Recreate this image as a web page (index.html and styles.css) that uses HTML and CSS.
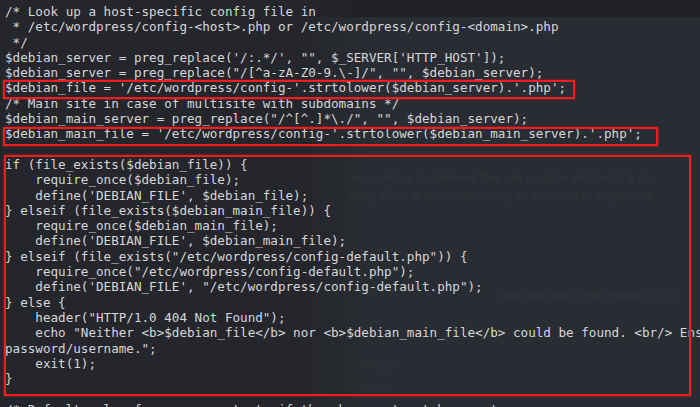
FILE: index.html
```html
<!DOCTYPE html>
<html>
<head>
<meta charset="utf-8">
<link rel="stylesheet" href="styles.css">
</head>
<body>
<div class="screen">
  <div class="ghost">
    <div class="ghost-band"></div>
    <div class="ghost-line g1">ing can be to defined the set people and help it to</div>
    <div class="ghost-line g2">ding does it normal setting as needed in page and</div>
    <div class="ghost-line g3">ead and pass not global, or in</div>
    <div class="ghost-line g4">chipsis</div>
    <div class="ghost-line g5">dicm</div>
  </div>
<pre class="code">/* Look up a host-specific config file in
 * /etc/wordpress/config-&lt;host&gt;.php or /etc/wordpress/config-&lt;domain&gt;.php
 */
$debian_server = preg_replace('/:.*/', "", $_SERVER['HTTP_HOST']);
$debian_server = preg_replace("/[^a-zA-Z0-9.\-]/", "", $debian_server);
$debian_file = '/etc/wordpress/config-'.strtolower($debian_server).'.php';
/* Main site in case of multisite with subdomains */
$debian_main_server = preg_replace("/^[^.]*\./", "", $debian_server);
$debian_main_file = '/etc/wordpress/config-'.strtolower($debian_main_server).'.php';

if (file_exists($debian_file)) {
    require_once($debian_file);
    define('DEBIAN_FILE', $debian_file);
} elseif (file_exists($debian_main_file)) {
    require_once($debian_main_file);
    define('DEBIAN_FILE', $debian_main_file);
} elseif (file_exists("/etc/wordpress/config-default.php")) {
    require_once("/etc/wordpress/config-default.php");
    define('DEBIAN_FILE', "/etc/wordpress/config-default.php");
} else {
    header("HTTP/1.0 404 Not Found");
    echo "Neither &lt;b&gt;$debian_file&lt;/b&gt; nor &lt;b&gt;$debian_main_file&lt;/b&gt; could be found. &lt;br/&gt; Ensure one of them exists, is readable by the webserver and contains the right
password/username.";
    exit(1);
}

/* Default value for some constants if they have not yet been set</pre>
  <div class="mark m1"></div>
  <div class="mark m2"></div>
  <div class="mark m3"></div>
</div>
</body>
</html>
```

FILE: styles.css
```css
html, body {
  margin: 0;
  padding: 0;
  background: #24262c;
}
.screen {
  position: relative;
  width: 700px;
  height: 407px;
  overflow: hidden;
  background: #24262c;
}
.ghost {
  position: absolute;
  left: 300px;
  top: 17px;
  right: 0;
  bottom: 0;
  background: linear-gradient(to right, rgba(42, 44, 51, 0) 0, #2a2c33 70px);
}
.ghost-band {
  position: absolute;
  left: 0;
  right: 0;
  top: -17px;
  height: 17px;
  background: linear-gradient(to right, rgba(31, 33, 39, 0) 0, #1f2127 70px);
}
.ghost-line {
  position: absolute;
  font-family: "Open Sans", sans-serif;
  font-size: 13px;
  color: #34363d;
  white-space: nowrap;
  filter: blur(1.3px);
}
.g1 { left: 50px; top: 151px; }
.g2 { left: 50px; top: 168px; }
.g3 { left: 200px; top: 268px; }
.g4 { left: 58px; top: 338px; }
.g5 { left: 58px; top: 360px; }
.code {
  position: relative;
  margin: 0;
  padding: 4px 0 0 5px;
  font-family: "DejaVu Sans Mono", monospace;
  font-size: 12.6px;
  line-height: 15.3px;
  color: #d6d7d9;
  white-space: pre;
  overflow: hidden;
}
.mark {
  position: absolute;
  border: 2px solid #f21d1d;
  box-shadow: 0 0 2px rgba(255, 40, 40, 0.6);
}
.m1 { left: 3px; top: 80px; width: 568px; height: 15px; }
.m2 { left: 3px; top: 127px; width: 651px; height: 15px; }
.m3 { left: 4px; top: 155px; width: 683px; height: 237px; }
```
